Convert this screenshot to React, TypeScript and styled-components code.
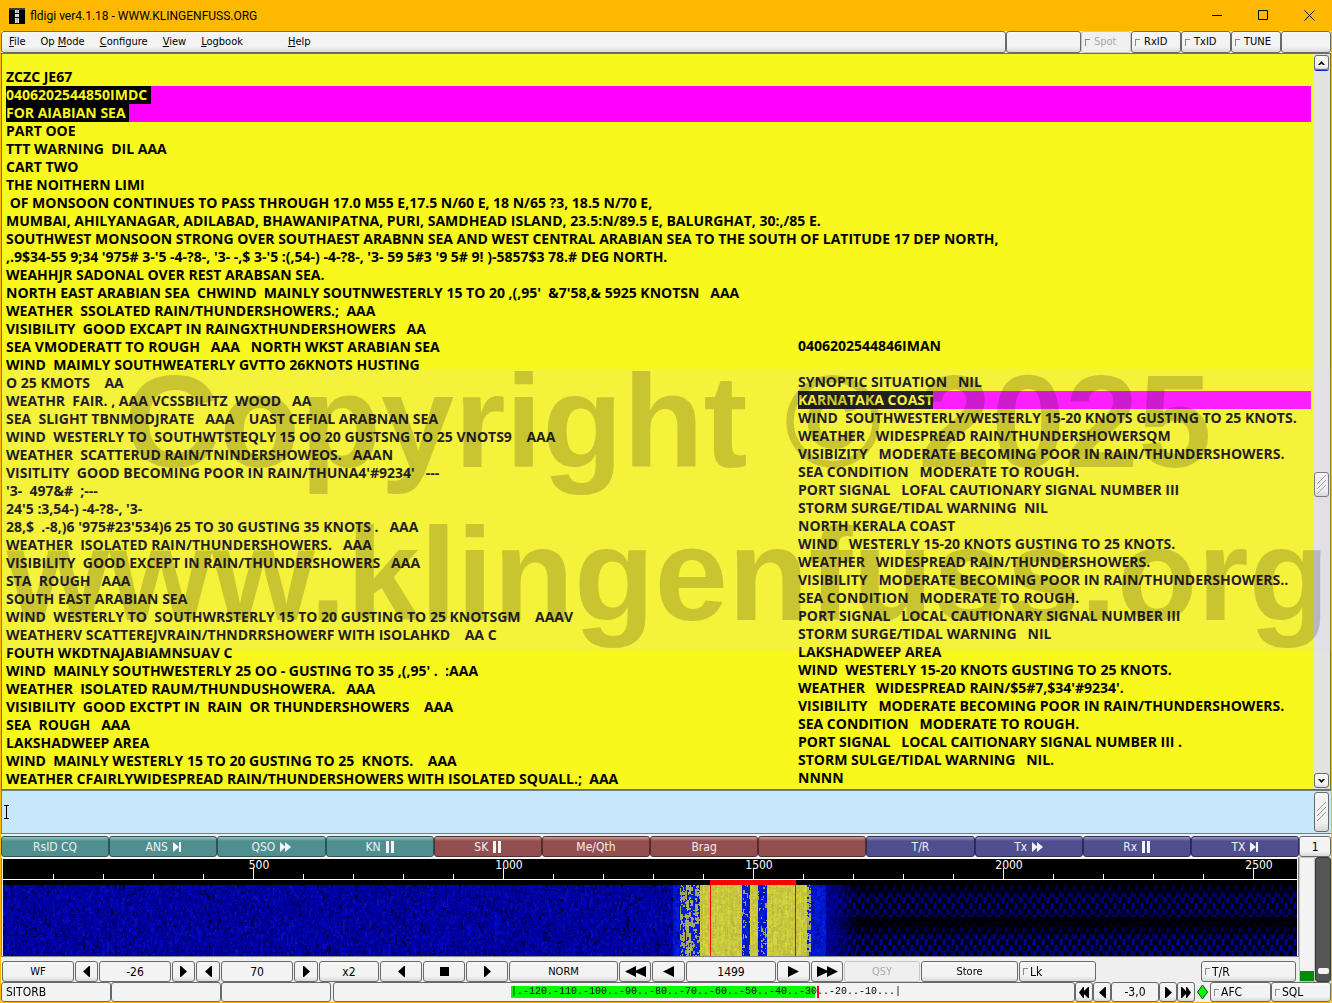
import React, { useEffect, useRef } from "react";
import styled, { createGlobalStyle, css } from "styled-components";

const ui = `"DejaVu Sans Condensed", "DejaVu Sans", "Open Sans", sans-serif`;
const face = "#f3f3f3";
const edge = "#6a6a6a";

const Global = createGlobalStyle`
  *, *::before, *::after { box-sizing: border-box; }
  html, body, #root { height: 100%; }
  body { margin: 0; background: #ffb900; font-family: ${ui}; overflow: hidden; }
  button, input, textarea { font: inherit; color: inherit; margin: 0; }
`;

const Window = styled.main`
  height: 100%;
  display: flex;
  flex-direction: column;
  background: #ffb900;
  color: #000;
  font-size: 12px;
`;

const TitleBar = styled.header`
  height: 31px;
  flex: none;
  display: flex;
  align-items: center;
  padding-left: 9px;
`;

const Title = styled.h1`
  flex: 1;
  margin: 0 0 0 5px;
  font: 400 12px/16px Roboto, "Open Sans", "Noto Sans", sans-serif;
  white-space: nowrap;
`;

const CaptionButton = styled.button`
  width: 46px;
  height: 31px;
  padding: 0;
  border: 0;
  background: none;
  display: grid;
  place-items: center;
`;

const Client = styled.div`
  flex: 1;
  min-height: 0;
  margin: 0 1px 1px;
  display: flex;
  flex-direction: column;
  background: #efefef;
`;

const raised = css`
  border: 1px solid ${edge};
  border-radius: 3px;
  background: linear-gradient(#fafafa, ${face} 3px, ${face} 75%, #d8d8d8);
`;

const TopRow = styled.div`
  flex: none;
  height: 22px;
  display: flex;
`;

const MenuBar = styled.nav`
  ${raised}
  flex: 1;
  display: flex;
  align-items: center;
`;

const MenuItem = styled.button<{ $apart?: boolean }>`
  padding: 0 8px 0 7px;
  margin-left: ${(p) => (p.$apart ? "30px" : "0")};
  border: 0;
  background: none;
  font-size: 11px;
  line-height: 16px;
`;

const Box = styled.div<{ $w: number }>`
  ${raised}
  width: ${(p) => p.$w}px;
`;

const CheckLabel = styled.label<{ $w?: number; $off?: boolean; $small?: boolean }>`
  ${raised}
  width: ${(p) => p.$w ?? 50}px;
  display: flex;
  align-items: center;
  gap: ${(p) => (p.$small ? 4 : 2)}px;
  padding-left: 3px;
  font-size: ${(p) => (p.$small ? 11 : 12)}px;
  line-height: 16px;
  ${(p) => p.$off && "color: #a8a8a8; border-color: #c4c4c4; background: #f0f0f0;"}
`;

const Tick = styled.input`
  appearance: none;
  flex: none;
  width: 5px;
  height: 7px;
  border: solid #8a8a8a;
  border-width: 1px 0 0 1px;
  background: transparent;
`;

const RxPane = styled.section`
  flex: 1;
  min-height: 0;
  display: flex;
  position: relative;
  border: 1px solid #77771c;
  background: #f8f81c;
`;

const RxText = styled.div`
  flex: 1;
  min-width: 0;
  margin: 14px 2px 3px 4px;
  display: grid;
  grid-template-columns: 792px minmax(0, 1fr);
  align-content: start;
  font: 700 14px/18px "Open Sans", "Noto Sans", sans-serif;
`;

const LeftCopy = styled.div`
  grid-area: 1 / 1 / 2 / 3;
`;

const RightCopy = styled.div`
  grid-area: 1 / 2 / 2 / 3;
  align-self: end;
  padding-bottom: 1px;
`;

const Line = styled.div<{ $hit?: boolean }>`
  height: 18px;
  white-space: pre;
  background: ${(p) => (p.$hit ? "#ff00ff" : "transparent")};
`;

const Hit = styled.mark`
  display: inline-block;
  height: 18px;
  background: #000;
  color: #f8f81c;
`;

const Watermark = styled.div`
  position: absolute;
  left: -1px;
  right: -1px;
  top: 315px;
  height: 282px;
  padding-left: 4px;
  display: flex;
  flex-direction: column;
  justify-content: flex-end;
  align-items: center;
  pointer-events: none;
  white-space: nowrap;
  background: rgba(230, 210, 250, 0.15);
  color: rgba(20, 22, 0, 0.2);
  font: 700 132px/153px "Liberation Sans", Arial, sans-serif;
`;

const ScrollTrack = styled.div`
  width: 17px;
  flex: none;
  display: flex;
  flex-direction: column;
  justify-content: space-between;
  padding: 1px 0 1px 1px;
  background: #e2e2e2;
`;

const ScrollButton = styled.button<{ $line?: boolean }>`
  ${raised}
  width: 15px;
  height: 15px;
  padding: 0;
  display: grid;
  place-items: center;
  box-shadow: ${(p) => (p.$line ? "0 1px 0 #1020e0" : "none")};
`;

const Thumb = styled.div<{ $h: number; $push?: number }>`
  ${raised}
  width: 15px;
  height: ${(p) => p.$h}px;
  margin-top: ${(p) => p.$push ?? 0}px;
  display: grid;
  place-items: center;
`;

const TxPane = styled.section`
  flex: none;
  height: 44px;
  display: flex;
  align-items: center;
  padding: 1px 2px 1px 2px;
  border: solid #6f7f88;
  border-width: 1px 0 1px 1px;
  background: #c7e8fb;
`;

const TxInput = styled.textarea`
  flex: 1;
  height: 36px;
  border: 0;
  resize: none;
  background: none;
  outline: none;
`;

const MacroRow = styled.div`
  flex: none;
  height: 23px;
  display: flex;
  padding: 2px 0 0;
`;

const tones = {
  teal: ["#4f8f8f", "#9cc4c4", "#2c5555"],
  red: ["#934f50", "#c9a0a0", "#552c2c"],
  blue: ["#4f4f90", "#9c9cc8", "#2c2c58"],
};

const Macro = styled.button<{ $tone: keyof typeof tones }>`
  flex: 1 1 0;
  min-width: 0;
  height: 21px;
  padding: 0;
  display: flex;
  align-items: center;
  justify-content: center;
  gap: 5px;
  white-space: nowrap;
  color: #f0f0f0;
  border: 1px solid ${(p) => tones[p.$tone][2]};
  border-radius: 3px;
  background: linear-gradient(${(p) => `${tones[p.$tone][1]}, ${tones[p.$tone][0]} 4px`});
`;

const MacroPage = styled.button`
  ${raised}
  width: 32px;
  height: 21px;
  padding: 0;
`;

const Lower = styled.div`
  flex: none;
  display: flex;
`;

const LowerMain = styled.div`
  flex: 1;
  min-width: 0;
`;

const Waterfall = styled.figure`
  height: 100px;
  margin: 0;
  padding: 1px 1px 0;
  border: 1px solid #8a8a8a;
  border-top-color: #fff;
  background: #efefef;
`;

const Screen = styled.div`
  display: flex;
  flex-direction: column;
  background: #000;
`;

const Ruler = styled.svg`
  display: block;
  width: 100%;
  height: 26px;
`;

const Spectrum = styled.canvas`
  display: block;
  width: 100%;
  height: 71px;
`;

const Controls = styled.div`
  height: 25px;
  padding: 4px 3px 0 1px;
  display: flex;
  gap: 1px;
`;

const Push = styled.button<{ $w: number; $off?: boolean; $size?: number }>`
  ${raised}
  width: ${(p) => p.$w}px;
  flex: none;
  padding: 0;
  display: grid;
  place-items: center;
  font-size: ${(p) => p.$size ?? 12}px;
  line-height: 16px;
  ${(p) => p.$off && "color: #a8a8a8; border-color: #c8c8c8; background: #efefef;"}
`;

const Field = styled.input<{ $w: number; $left?: boolean }>`
  width: ${(p) => p.$w}px;
  flex: none;
  min-width: 0;
  padding: 0 ${(p) => (p.$left ? 4 : 0)}px;
  border: 1px solid ${edge};
  border-radius: 3px;
  background: ${face};
  text-align: ${(p) => (p.$left ? "left" : "center")};
`;

const Spacer = styled.span`
  flex: 1;
`;

const Meters = styled.div`
  flex: none;
  width: 32px;
  height: 125px;
  display: flex;
`;

const Level = styled.div`
  width: 16px;
  border: 1px solid #c4c4c4;
  background: linear-gradient(#f3f3f3 113px, #008c00 113px);
`;

const Squelch = styled.div`
  flex: 1;
  display: flex;
  flex-direction: column;
  align-items: center;
  justify-content: flex-end;
  padding-bottom: 7px;
  border: 1px solid #383838;
  border-radius: 3px;
  background: #555;
`;

const Knob = styled.span`
  width: 11px;
  height: 6px;
  border-radius: 2px;
  background: #f4f4f4;
`;

const StatusBar = styled.footer`
  flex: none;
  height: 20px;
  display: flex;
  align-items: stretch;
`;

const SignalBox = styled.div`
  flex: 1;
  min-width: 0;
  margin: 0 0 0 2px;
  display: flex;
  align-items: center;
  justify-content: center;
  padding-left: 4px;
  border: 1px solid ${edge};
  border-radius: 3px;
  background: ${face};
`;

const Signal = styled.output`
  width: 390px;
  flex: none;
  overflow: hidden;
  white-space: pre;
  font: 400 10px/12px "Liberation Mono", "Courier New", monospace;
  background: linear-gradient(
    90deg,
    #00ff00 304px,
    #fff 304px,
    #fff 306px,
    #f00 306px,
    #f00 308px,
    transparent 308px
  );
`;

const DiamondWrap = styled.span`
  width: 15px;
  display: grid;
  place-items: center;
`;

const left = [
  "ZCZC JE67",
  "*0406202544850IMDC ",
  "*FOR AIABIAN SEA ",
  "PART OOE",
  "TTT WARNING  DIL AAA",
  "CART TWO",
  "THE NOITHERN LIMI",
  " OF MONSOON CONTINUES TO PASS THROUGH 17.0 M55 E,17.5 N/60 E, 18 N/65 ?3, 18.5 N/70 E,",
  "MUMBAI, AHILYANAGAR, ADILABAD, BHAWANIPATNA, PURI, SAMDHEAD ISLAND, 23.5:N/89.5 E, BALURGHAT, 30:,/85 E.",
  "SOUTHWEST MONSOON STRONG OVER SOUTHAEST ARABNN SEA AND WEST CENTRAL ARABIAN SEA TO THE SOUTH OF LATITUDE 17 DEP NORTH,",
  ",.9$34-55 9;34 '975# 3-'5 -4-?8-, '3- -,$ 3-'5 :(,54-) -4-?8-, '3- 59 5#3 '9 5# 9! )-5857$3 78.# DEG NORTH.",
  "WEAHHJR SADONAL OVER REST ARABSAN SEA.",
  "NORTH EAST ARABIAN SEA  CHWIND  MAINLY SOUTNWESTERLY 15 TO 20 ,(,95'  &7'58,& 5925 KNOTSN   AAA",
  "WEATHER  SSOLATED RAIN/THUNDERSHOWERS.;  AAA",
  "VISIBILITY  GOOD EXCAPT IN RAINGXTHUNDERSHOWERS   AA",
  "SEA VMODERATT TO ROUGH   AAA   NORTH WKST ARABIAN SEA",
  "WIND  MAIMLY SOUTHWEATERLY GVTTO 26KNOTS HUSTING",
  "O 25 KMOTS    AA",
  "WEATHR  FAIR. , AAA VCSSBILITZ  WOOD   AA",
  "SEA  SLIGHT TBNMODJRATE   AAA    UAST CEFIAL ARABNAN SEA",
  "WIND  WESTERLY TO  SOUTHWTSTEQLY 15 OO 20 GUSTSNG TO 25 VNOTS9    AAA",
  "WEATHER  SCATTERUD RAIN/TNINDERSHOWEOS.   AAAN",
  "VISITLITY  GOOD BECOMING POOR IN RAIN/THUNA4'#9234'   ---",
  "'3-  497&#  ;---",
  "24'5 :3,54-) -4-?8-, '3-",
  "28,$  .-8,)6 '975#23'534)6 25 TO 30 GUSTING 35 KNOTS .   AAA",
  "WEATHER  ISOLATED RAIN/THUNDERSHOWERS.   AAA",
  "VISIBILITY  GOOD EXCEPT IN RAIN/THUNDERSHOWERS   AAA",
  "STA  ROUGH   AAA",
  "SOUTH EAST ARABIAN SEA",
  "WIND  WESTERLY TO  SOUTHWRSTERLY 15 TO 20 GUSTING TO 25 KNOTSGM    AAAV",
  "WEATHERV SCATTEREJVRAIN/THNDRRSHOWERF WITH ISOLAHKD    AA C",
  "FOUTH WKDTNAJABIAMNSUAV C",
  "WIND  MAINLY SOUTHWESTERLY 25 OO - GUSTING TO 35 ,(,95' .  :AAA",
  "WEATHER  ISOLATED RAUM/THUNDUSHOWERA.   AAA",
  "VISIBILITY  GOOD EXCTPT IN  RAIN  OR THUNDERSHOWERS    AAA",
  "SEA  ROUGH   AAA",
  "LAKSHADWEEP AREA",
  "WIND  MAINLY WESTERLY 15 TO 20 GUSTING TO 25  KNOTS.    AAA",
  "WEATHER CFAIRLYWIDESPREAD RAIN/THUNDERSHOWERS WITH ISOLATED SQUALL.;  AAA",
];

const right = [
  "0406202544846IMAN",
  "",
  "SYNOPTIC SITUATION   NIL",
  "*KARNATAKA COAST",
  "WIND  SOUTHWESTERLY/WESTERLY 15-20 KNOTS GUSTING TO 25 KNOTS.",
  "WEATHER   WIDESPREAD RAIN/THUNDERSHOWERSQM",
  "VISIBIZITY   MODERATE BECOMING POOR IN RAIN/THUNDERSHOWERS.",
  "SEA CONDITION   MODERATE TO ROUGH.",
  "PORT SIGNAL   LOFAL CAUTIONARY SIGNAL NUMBER III",
  "STORM SURGE/TIDAL WARNING  NIL",
  "NORTH KERALA COAST",
  "WIND   WESTERLY 15-20 KNOTS GUSTING TO 25 KNOTS.",
  "WEATHER   WIDESPREAD RAIN/THUNDERSHOWERS.",
  "VISIBILITY   MODERATE BECOMING POOR IN RAIN/THUNDERSHOWERS..",
  "SEA CONDITION   MODERATE TO ROUGH.",
  "PORT SIGNAL   LOCAL CAUTIONARY SIGNAL NUMBER III",
  "STORM SURGE/TIDAL WARNING   NIL",
  "LAKSHADWEEP AREA",
  "WIND  WESTERLY 15-20 KNOTS GUSTING TO 25 KNOTS.",
  "WEATHER   WIDESPREAD RAIN/$5#7,$34'#9234'.",
  "VISIBILITY   MODERATE BECOMING POOR IN RAIN/THUNDERSHOWERS.",
  "SEA CONDITION   MODERATE TO ROUGH.",
  "PORT SIGNAL   LOCAL CAITIONARY SIGNAL NUMBER III .",
  "STORM SULGE/TIDAL WARNING   NIL.",
  "NNNN",
];

const Copy = ({ lines }: { lines: string[] }) => (
  <>
    {lines.map((t, i) =>
      t[0] === "*" ? (
        <Line key={i} $hit>
          <Hit>{t.slice(1)}</Hit>
        </Line>
      ) : (
        <Line key={i}>{t}</Line>
      ),
    )}
  </>
);

type Glyph = "play" | "back" | "ff" | "rew" | "stop" | "ffw" | "rewn" | "back1" | "play1";
const glyphs: Record<Glyph, [number, string]> = {
  play: [11, "M0 0L11 5.5L0 11Z"],
  back: [11, "M11 0L0 5.5L11 11Z"],
  play1: [7, "M0 0H1L7 5.5L1 11H0Z"],
  back1: [7, "M7 0H6L0 5.5L6 11H7Z"],
  ff: [21, "M0 0L10 4.5V0L21 5.5L10 11V6.5L0 11Z"],
  rew: [21, "M21 0L11 4.5V0L0 5.5L11 11V6.5L21 11Z"],
  stop: [9, "M0 1H9V10H0Z"],
  ffw: [10, "M0 0H1L5 4V0H6L10 5.5L6 11H5V7L1 11H0Z"],
  rewn: [10, "M10 0H9L5 4V0H4L0 5.5L4 11H5V7L9 11H10Z"],
};

const Arrow = ({ g }: { g: Glyph }) => (
  <svg width={glyphs[g][0]} height="11" viewBox={`0 0 ${glyphs[g][0]} 11`} aria-hidden="true">
    <path d={glyphs[g][1]} fill="#000" />
  </svg>
);

const MacroIcon = ({ g }: { g: "next" | "ff" | "pause" }) => (
  <svg width={g === "ff" ? 11 : 8} height="12" viewBox={`0 0 ${g === "ff" ? 11 : 8} 12`} fill="#f4f4f4" aria-hidden="true">
    {g === "next" && <path d="M0 1L6 6L0 11ZM6 1H8V11H6Z" />}
    {g === "ff" && <path d="M0 1L5 5.5V1L11 6L5 11V6.5L0 11Z" />}
    {g === "pause" && <path d="M0 0H3V12H0ZM5 0H8V12H5Z" />}
  </svg>
);

const macros: [string, "next" | "ff" | "pause" | "", keyof typeof tones][] = [
  ["RsID CQ", "", "teal"],
  ["ANS", "next", "teal"],
  ["QSO", "ff", "teal"],
  ["KN", "pause", "teal"],
  ["SK", "pause", "red"],
  ["Me/Qth", "", "red"],
  ["Brag", "", "red"],
  ["", "", "red"],
  ["T/R", "", "blue"],
  ["Tx", "ff", "blue"],
  ["Rx", "pause", "blue"],
  ["TX", "next", "blue"],
];

const WF_W = 1294;
const WF_H = 71;

function paintSpectrum(ctx: CanvasRenderingContext2D) {
  let seed = 20250604;
  const rnd = () => {
    seed = (seed * 1664525 + 1013904223) >>> 0;
    return seed / 4294967296;
  };
  const img = ctx.createImageData(WF_W, WF_H);
  // each streak of noise is about two pixels wide and a few pixels tall
  const column = new Float32Array(WF_H);
  for (let x = 0; x < WF_W; x++) {
    const fresh = x % 2 === 0;
    const tint = rnd();
    let n = rnd();
    for (let y = 0; y < WF_H; y++) {
      if (rnd() < 0.5) n = rnd();
      column[y] = fresh ? n : column[y] * 0.7 + n * 0.3;
      const v = column[y];
      let r = 0;
      let g = 0;
      let b = 0;
      let yellow = 0;
      if (x >= 677 && x < 697) yellow = x > 682 && x < 688 ? 0.7 : 0.4;
      else if (x >= 697 && x < 739) yellow = 1;
      else if (x >= 739 && x < 747) yellow = 0.2;
      else if (x >= 747 && x < 755) yellow = 1;
      else if (x >= 755 && x < 764) yellow = 0.2;
      else if (x >= 764 && x < 804) yellow = 1;
      else if (x >= 804 && x < 808) yellow = 0.6;
      if (yellow && v < yellow) {
        const l = yellow === 1 ? 178 + v * 30 + tint * 14 : 155 + v * 40;
        r = l;
        g = l;
        b = yellow === 1 ? 45 + rnd() * 35 : 70 + rnd() * 60;
      } else if (x < 670) {
        b = v < 0.06 ? 25 : v < 0.14 ? 80 : 115 + v * 85;
        g = v > 0.85 ? 14 : 0;
      } else if (x < 823) {
        b = 165 + v * 75;
        g = 10 + v * 25;
      } else {
        const fade = Math.max(0, Math.min(1, 1 - (x - 823) / 32));
        const band = y < 8 ? 0.4 : y < 32 ? 0.85 : y < 42 ? 0.15 : y < 50 ? 0.5 : 1;
        const row = Math.floor(y / 6) % 2;
        const wide = Math.cos((x * 2 * Math.PI) / 9 + row * Math.PI);
        const fine = Math.cos((x * 4 * Math.PI) / 9 + Math.floor(y / 3));
        const cell = Math.max(10, 60 + 85 * wide + 50 * fine);
        b = fade * (v < 0.3 * (1 - fade) ? 15 : 110 + v * 90) + (1 - fade) * cell * band;
      }
      const i = (y * WF_W + x) * 4;
      img.data[i] = r;
      img.data[i + 1] = g;
      img.data[i + 2] = b;
      img.data[i + 3] = 255;
    }
  }
  ctx.putImageData(img, 0, 0);
  ctx.fillStyle = "#ff0000";
  ctx.fillRect(707, 0, 1, WF_H);
  ctx.fillRect(792, 0, 1, WF_H);
}

const WaterfallView = () => {
  const ref = useRef<HTMLCanvasElement>(null);
  useEffect(() => {
    const ctx = ref.current?.getContext("2d");
    if (ctx) paintSpectrum(ctx);
  }, []);
  const ticks = Array.from({ length: 25 }, (_, i) => i + 1);
  return (
    <Waterfall>
      <Screen>
        <Ruler viewBox={`0 0 ${WF_W} 26`} preserveAspectRatio="none">
          {ticks.map((t) => (
            <rect key={t} x={t * 50} y={t % 5 ? 15 : 9} width="1" height={t % 5 ? 5 : 11} fill="#fff" />
          ))}
          <rect x="0" y="20" width={WF_W} height="1" fill="#fff" />
          <rect x="707" y="21" width="86" height="5" fill="#f00" />
          {[500, 1000, 1500, 2000, 2500].map((f) => (
            <text key={f} x={f / 2 + 6} y="10" textAnchor="middle" fill="#fff" fontSize="12">
              {f}
            </text>
          ))}
        </Ruler>
        <Spectrum ref={ref} width={WF_W} height={WF_H} />
      </Screen>
    </Waterfall>
  );
};

const Check = ({ text, w, off, small }: { text: string; w?: number; off?: boolean; small?: boolean }) => (
  <CheckLabel $w={w} $off={off} $small={small}>
    <Tick type="checkbox" disabled={off} />
    {text}
  </CheckLabel>
);

const Grip = () => (
  <svg width="9" height="20" viewBox="0 0 9 20" stroke="#999" fill="none" aria-hidden="true">
    <path d="M0 9L9 0M0 14L9 5M0 19L9 10" />
  </svg>
);

export default function App() {
  return (
    <>
      <Global />
      <Window>
        <TitleBar>
          <svg width="16" height="16" viewBox="0 0 16 16" aria-hidden="true">
            <rect width="16" height="16" fill="#000" />
            <path d="M0 1H16" stroke="#777" />
            <path d="M6 2H10V5H6ZM6 6H10V9H6ZM6 10H10V15H6Z" fill="#ddd" />
            <path d="M8 2V5M8 10V15" stroke="#999" />
          </svg>
          <Title>fldigi ver4.1.18 - WWW.KLINGENFUSS.ORG</Title>
          <CaptionButton aria-label="Minimize">
            <svg width="11" height="11" stroke="#000" fill="none"><path d="M0 5.5H10" /></svg>
          </CaptionButton>
          <CaptionButton aria-label="Maximize">
            <svg width="11" height="11" stroke="#000" fill="none"><path d="M.5 .5H9.500V9.500H.5Z" /></svg>
          </CaptionButton>
          <CaptionButton aria-label="Close">
            <svg width="11" height="11" stroke="#000" fill="none"><path d="M.5 .5L10.500 10.500M10.500 .5L.5 10.500" /></svg>
          </CaptionButton>
        </TitleBar>
        <Client>
          <TopRow>
            <MenuBar>
              <MenuItem><u>F</u>ile</MenuItem>
              <MenuItem>Op <u>M</u>ode</MenuItem>
              <MenuItem><u>C</u>onfigure</MenuItem>
              <MenuItem><u>V</u>iew</MenuItem>
              <MenuItem><u>L</u>ogbook</MenuItem>
              <MenuItem $apart><u>H</u>elp</MenuItem>
            </MenuBar>
            <Box $w={75} />
            <Check text="Spot" off small />
            <Check text="RxID" small />
            <Check text="TxID" small />
            <Check text="TUNE" small />
            <Box $w={50} />
          </TopRow>
          <RxPane>
            <RxText>
              <LeftCopy><Copy lines={left} /></LeftCopy>
              <RightCopy><Copy lines={right} /></RightCopy>
            </RxText>
            <ScrollTrack>
              <ScrollButton $line aria-label="Scroll up">
                <svg width="7" height="4"><path d="M0 4L3.500 0L7 4H5L3.500 2.500L2 4Z" /></svg>
              </ScrollButton>
              <Thumb $h={25} $push={126}><Grip /></Thumb>
              <ScrollButton aria-label="Scroll down">
                <svg width="7" height="4"><path d="M0 0L3.500 4L7 0H5L3.500 1.500L2 0Z" /></svg>
              </ScrollButton>
            </ScrollTrack>
            <Watermark>
              <span>Copyright © 2025</span>
              <span>www.klingenfuss.org</span>
            </Watermark>
          </RxPane>
          <TxPane>
            <svg width="5" height="14" stroke="#000" fill="none" aria-hidden="true">
              <path d="M0 .5H5M2.500 0V14M0 13.500H5" />
            </svg>
            <TxInput aria-label="Transmit text" />
            <Thumb $h={40}><Grip /></Thumb>
          </TxPane>
          <MacroRow>
            {macros.map(([text, icon, tone], i) => (
              <Macro key={i} $tone={tone} aria-label={text || "Empty macro"}>
                {text}
                {icon && <MacroIcon g={icon} />}
              </Macro>
            ))}
            <MacroPage>1</MacroPage>
          </MacroRow>
          <Lower>
            <LowerMain>
              <WaterfallView />
              <Controls>
                <Push $w={72} $size={11}>WF</Push>
                <Push $w={23} aria-label="Lower reference"><Arrow g="back1" /></Push>
                <Field $w={72} aria-label="Reference level" defaultValue="-26" />
                <Push $w={23} aria-label="Raise reference"><Arrow g="play1" /></Push>
                <Push $w={24} aria-label="Lower range"><Arrow g="back1" /></Push>
                <Field $w={72} aria-label="Range" defaultValue="70" />
                <Push $w={24} aria-label="Raise range"><Arrow g="play1" /></Push>
                <Push $w={60}>x2</Push>
                <Push $w={42} aria-label="Scroll left"><Arrow g="back1" /></Push>
                <Push $w={42} aria-label="Center"><Arrow g="stop" /></Push>
                <Push $w={42} aria-label="Scroll right"><Arrow g="play1" /></Push>
                <Push $w={109} $size={11}>NORM</Push>
                <Push $w={32} aria-label="Fast down"><Arrow g="rew" /></Push>
                <Push $w={33} aria-label="Down"><Arrow g="back" /></Push>
                <Field $w={90} aria-label="Audio frequency" defaultValue="1499" />
                <Push $w={33} aria-label="Up"><Arrow g="play" /></Push>
                <Push $w={32} aria-label="Fast up"><Arrow g="ff" /></Push>
                <Push $w={76} $off $size={11} disabled>QSY</Push>
                <Push $w={97} $size={11}>Store</Push>
                <Check text="Lk" w={77} />
                <Spacer />
                <Check text="T/R" w={95} />
              </Controls>
            </LowerMain>
            <Meters>
              <Level />
              <Squelch><Knob /></Squelch>
            </Meters>
          </Lower>
          <StatusBar>
            <Field $w={110} $left readOnly aria-label="Mode" value="SITORB" />
            <Field $w={110} readOnly aria-label="Status one" value="" />
            <Field $w={110} readOnly aria-label="Status two" value="" />
            <SignalBox>
              <Signal>|.-120.-110.-100..-90..-80..-70..-60..-50..-40..-30..-20..-10...|</Signal>
            </SignalBox>
            <Push $w={18} aria-label="Gain fast down"><Arrow g="rewn" /></Push>
            <Push $w={18} aria-label="Gain down"><Arrow g="back1" /></Push>
            <Field $w={48} aria-label="Transmit level" defaultValue="-3,0" />
            <Push $w={18} aria-label="Gain up"><Arrow g="play1" /></Push>
            <Push $w={18} aria-label="Gain fast up"><Arrow g="ffw" /></Push>
            <DiamondWrap>
              <svg width="11" height="16" viewBox="0 0 11 16" aria-hidden="true">
                <path d="M5.500 1L10.500 8L5.500 15L.5 8Z" fill="#00ff00" stroke="#0a4a0a" />
              </svg>
            </DiamondWrap>
            <Check text="AFC" w={61} />
            <Check text="SQL" w={60} />
          </StatusBar>
        </Client>
      </Window>
    </>
  );
}
